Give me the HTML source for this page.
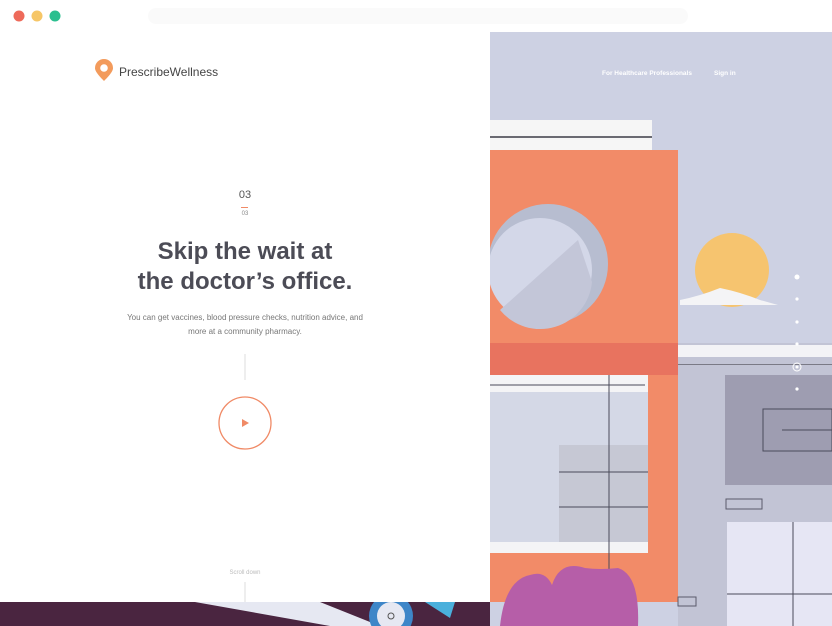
<!DOCTYPE html>
<html><head><style>
*{margin:0;padding:0;box-sizing:border-box}
body{width:832px;height:626px;overflow:hidden;background:#fff;position:relative;font-family:"Liberation Sans",sans-serif}
.a{position:absolute}
</style></head><body>
<div class="a" style="left:0;top:602px;width:832px;height:24px;background:#4a2540"></div>
<svg class="a" style="left:0;top:0" width="832" height="626">
<rect x="490" y="32" width="342" height="594" fill="#cdd1e3"/>
<rect x="490" y="120" width="162" height="30" fill="#f6f6f6"/>
<rect x="490" y="136" width="162" height="2" fill="#6a6a72"/>
<rect x="490" y="150" width="188" height="452" fill="#f28b68"/>
<rect x="490" y="343" width="188" height="32" fill="#e8735f"/>
<circle cx="548" cy="264" r="60" fill="#b7bdd0"/>
<circle cx="540" cy="270" r="52" fill="#d3d7e8"/>
<path d="M578 240 L500 310 A52 52 0 0 0 592 282 Z" fill="#c3c6d8"/>
<circle cx="732" cy="270" r="37" fill="#f6c46f"/>
<path d="M680 300 Q700 296 720 288 Q740 292 760 300 L778 305 L680 305Z" fill="#f4f4f6"/>
<rect x="678" y="343" width="154" height="283" fill="#c2c4d5"/>
<rect x="678" y="345" width="154" height="12" fill="#f3f3f6"/>
<rect x="678" y="364" width="154" height="1" fill="#7a7a86"/>
<rect x="725" y="375" width="107" height="110" fill="#9e9db1"/>
<rect x="763" y="409" width="69" height="42" fill="none" stroke="#4a4a5a" stroke-width="1"/>
<line x1="782" y1="430" x2="832" y2="430" stroke="#4a4a5a"/>
<rect x="726" y="499" width="36" height="10" fill="none" stroke="#5a5a6a"/>
<rect x="727" y="522" width="105" height="104" fill="#e6e6f4"/>
<line x1="793" y1="522" x2="793" y2="626" stroke="#4a4a5a"/>
<line x1="727" y1="594" x2="832" y2="594" stroke="#4a4a5a"/>
<rect x="678" y="597" width="18" height="9" fill="none" stroke="#5a5a6a"/>
<rect x="490" y="375" width="158" height="178" fill="#f4f4f6"/>
<rect x="490" y="392" width="158" height="150" fill="#d4d8e6"/>
<rect x="559" y="445" width="89" height="97" fill="#c6c8d4"/>
<line x1="490" y1="385" x2="645" y2="385" stroke="#4a4a5a"/>
<line x1="609" y1="375" x2="609" y2="570" stroke="#4a4a5a"/>
<line x1="559" y1="472" x2="648" y2="472" stroke="#4a4a5a"/>
<line x1="559" y1="507" x2="648" y2="507" stroke="#4a4a5a"/>
<path d="M500 626 Q505 580 530 575 Q545 570 552 585 Q560 560 585 568 Q600 570 618 568 Q640 575 638 626Z" fill="#b65ea8"/>
<circle cx="797" cy="277" r="2.5" fill="#fff"/>
<circle cx="797" cy="299" r="1.6" fill="#fff"/>
<circle cx="797" cy="322" r="1.6" fill="#fff"/>
<circle cx="797" cy="344" r="1.6" fill="#fff"/>
<circle cx="797" cy="367" r="4" fill="none" stroke="#fff"/>
<circle cx="797" cy="367" r="1.5" fill="#fff"/>
<circle cx="797" cy="389" r="1.6" fill="#fff"/>
<path d="M195 602 L320 602 L380 626 L330 626Z" fill="#e6e8f2"/>
<circle cx="391" cy="616" r="22" fill="#3e86c8"/>
<circle cx="391" cy="616" r="14" fill="#e6e8f2"/>
<circle cx="391" cy="616" r="3" fill="none" stroke="#555"/>
<path d="M425 602 L455 602 L450 618 Z" fill="#4ab0dc"/>
<rect x="0" y="0" width="490" height="602" fill="#fff"/>
<rect x="490" y="0" width="342" height="32" fill="#fff"/>
<rect x="148" y="8" width="540" height="16" rx="8" fill="#fafafa"/>
<circle cx="19" cy="16" r="5.5" fill="#ee6a5a"/>
<circle cx="37" cy="16" r="5.5" fill="#f6c667"/>
<circle cx="55" cy="16" r="5.5" fill="#2bbf8f"/>
<path d="M104 81 C96 73 95 70 95 68 A9 9 0 0 1 113 68 C113 70 112 73 104 81Z" fill="#f39b5c"/>
<circle cx="104" cy="68" r="3.8" fill="#fff"/>
<line x1="245" y1="354" x2="245" y2="380" stroke="#ddd"/>
<circle cx="245" cy="423" r="26" fill="none" stroke="#f08a66" stroke-width="1.3"/>
<path d="M242 419 L249 423 L242 427Z" fill="#f08a66"/>
<rect x="241" y="207" width="7" height="1" fill="#f08a66"/>
<line x1="245" y1="582" x2="245" y2="602" stroke="#ddd"/>
</svg>
<div class="a" style="left:119px;top:65px;font-size:12px;color:#444">PrescribeWellness</div>
<div class="a" style="left:602px;top:70px;font-size:6.5px;color:#fff;font-weight:bold">For Healthcare Professionals</div>
<div class="a" style="left:714px;top:70px;font-size:6.5px;color:#fff;font-weight:bold">Sign in</div>
<div class="a" style="left:0;width:490px;text-align:center;top:189px;font-size:11px;color:#555">03</div>
<div class="a" style="left:0;width:490px;text-align:center;top:211px;font-size:6px;color:#888">03</div>
<div class="a" style="left:0;width:490px;text-align:center;top:237px;font-size:24px;line-height:30px;font-weight:bold;color:#4c4c56">Skip the wait at<br>the doctor’s office.</div>
<div class="a" style="left:0;width:490px;text-align:center;top:311px;font-size:8px;line-height:14px;color:#777">You can get vaccines, blood pressure checks, nutrition advice, and<br>more at a community pharmacy.</div>
<div class="a" style="left:0;width:490px;text-align:center;top:570px;font-size:6px;color:#bbb">Scroll down</div>
</body></html>
